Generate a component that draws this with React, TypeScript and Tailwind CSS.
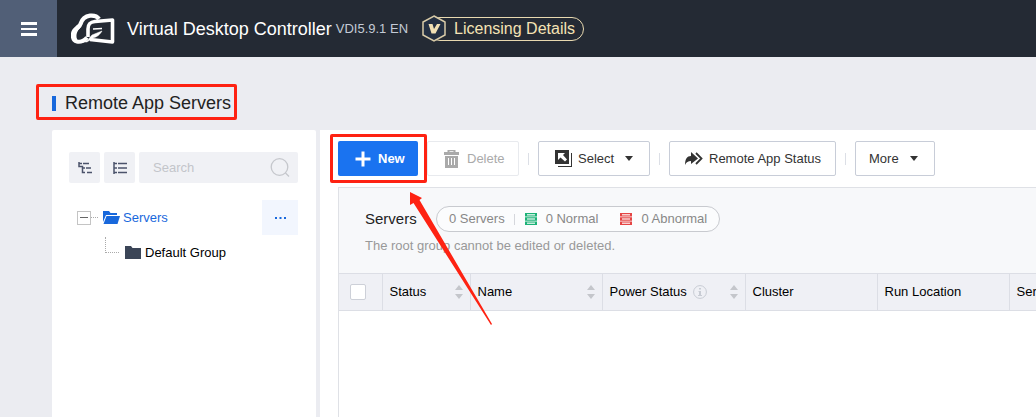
import type { ReactNode } from 'react'

const columns = [
  { label: 'Status', width: 'w-[88px]', sortable: true },
  { label: 'Name', width: 'w-[132px]', sortable: true },
  { label: 'Power Status', width: 'w-[143px]', sortable: true, info: true },
  { label: 'Cluster', width: 'w-[132px]' },
  { label: 'Run Location', width: 'w-[132px]' },
  { label: 'Server IP', width: 'w-[132px]' },
]

function Logo() {
  return (
    <svg viewBox="0 0 44 32" className="h-8 w-11" fill="none" stroke="#fff" strokeLinejoin="round">
      <path d="M28 6C25 1.500 13 0 9.500 11C9 13 8 13.500 6 15C0 19 1 27 6 28.500C10 29.500 14 27 16 24.500" strokeWidth="4.200" />
      <path d="M8 13C3 18 2 22 4 27" strokeWidth="4.500" />
      <path d="M17 24V16C17 11 19 9 24 8.500L41.500 7V29L19 26.500" strokeWidth="3.600" />
      <path d="M10 29C17 29 18 25 21 22L31 18C28 23 25 24 22 25L16 29Z" fill="#fff" strokeWidth=".5" />
      <path d="M22 16L31 15.500" strokeWidth="1.500" />
    </svg>
  )
}

function VipBadge() {
  return (
    <svg viewBox="0 0 24 27" className="h-[27px] w-6">
      <path d="M12 1L23 7V20L12 26L1 20V7Z" fill="#232f42" stroke="#d9cba8" strokeWidth="1.500" />
      <path d="M6.500 9H10.500L12 14L15 9H18.500L13.500 18.500H9.500Z" fill="#f0dfb4" />
    </svg>
  )
}

function ServerIcon({ className }: { className: string }) {
  return (
    <svg viewBox="0 0 12 12" className={`h-3 w-3 ${className}`}>
      <path d="M0 0H12V3.500H0ZM0 4.300H12V7.700H0ZM0 8.500H12V12H0Z" fill="currentColor" />
      <path d="M2 1H10V2.500H2ZM2 5.300H10V6.700H2ZM2 9.500H10V11H2Z" fill="#fff" fillOpacity=".75" />
    </svg>
  )
}

function Caret() {
  return (
    <svg viewBox="0 0 8 5" className="h-[5px] w-2">
      <path d="M0 0H8L4 5Z" fill="#333" />
    </svg>
  )
}

function ToolButton({ children, className = '' }: { children: ReactNode; className?: string }) {
  return (
    <button className={`flex h-[35px] shrink-0 items-center rounded-xs border border-[#c8cdd8] bg-white text-[#333] ${className}`}>
      {children}
    </button>
  )
}

function Divider() {
  return <span className="mx-[9px] h-3 w-px shrink-0 bg-[#dcdfe6]" />
}

export default function App() {
  return (
    <div className="relative flex min-h-screen flex-col overflow-hidden bg-[#ebecf1] font-['Liberation_Sans',Arial,sans-serif] text-[13px] leading-4 text-black">
      <header className="flex h-[57px] items-center bg-[#242a34]">
        <button aria-label="Menu" className="flex h-full w-[57px] items-center justify-center bg-[#515f77]">
          <svg viewBox="0 0 16 14" className="h-[14px] w-4">
            <path d="M0 0H16V3H0ZM0 6H16V8H0ZM0 11H16V14H0Z" fill="#fff" />
          </svg>
        </button>
        <div className="ml-[14px]"><Logo /></div>
        <span className="ml-3 text-lg leading-6 text-white">Virtual Desktop Controller</span>
        <span className="ml-1 text-[#c3cad6]">VDI5.9.1 EN</span>
        <a href="#licensing" className="relative ml-5 flex h-6 items-center rounded-full border border-[#e8d9b0] pr-2 pl-[25px] text-base text-[#f5e3b5]">
          <span className="absolute -left-[7px]"><VipBadge /></span>
          Licensing Details
        </a>
      </header>

      <h1 className="mt-9 mb-[17px] ml-[52px] flex h-5 items-center text-lg text-[#222]">
        <span className="mr-[9px] h-[15px] w-1 bg-[#1868dc]" />
        Remote App Servers
      </h1>

      <main className="flex flex-1 pl-[52px]">
        <aside className="w-[264px] shrink-0 rounded-t-xs bg-white pt-[22px] pr-[18px] pl-[17px]">
          <div className="flex gap-1">
            <button aria-label="Expand tree" className="flex h-[31px] w-[31px] shrink-0 items-center justify-center rounded-xs bg-[#f0f1f5]">
              <svg viewBox="0 0 14 12" className="h-3 w-[14px]" stroke="#4b536b" fill="none" strokeWidth="1.500">
                <path d="M1 0V4.500H4.500V10.500H7M1 1.500H4M5 1.500H11M4.500 6H7M8 6H13M9 10.500H14" />
              </svg>
            </button>
            <button aria-label="Collapse tree" className="flex h-[31px] w-[31px] shrink-0 items-center justify-center rounded-xs bg-[#f0f1f5]">
              <svg viewBox="0 0 14 12" className="h-3 w-[14px]" stroke="#4b536b" fill="none" strokeWidth="1.500">
                <path d="M1 0V12M1 1.500H4M5 1.500H14M1 6H4M5 6H14M1 10.500H4M5 10.500H14" />
              </svg>
            </button>
            <label className="flex h-[31px] min-w-0 flex-1 items-center rounded-xs bg-[#f0f1f5] pr-2 pl-[14px]">
              <input aria-label="Search" placeholder="Search" className="w-full min-w-0 bg-transparent outline-none placeholder:text-[#c3c5ca]" />
              <svg viewBox="0 0 20 20" className="h-5 w-5 shrink-0" fill="none" stroke="#c5c7cc" strokeWidth="1.300">
                <circle cx="9.500" cy="9" r="8.300" />
                <path d="M15.500 15L19 18.500" />
              </svg>
            </label>
          </div>

          <ul className="mt-[17px]">
            <li className="flex h-[35px] items-center pl-2 text-[#1868dc]">
              <button aria-label="Collapse Servers" className="flex h-[14px] w-[14px] items-center justify-center border border-[#c4c4c4]">
                <span className="h-px w-2 bg-[#666]" />
              </button>
              <span className="mr-[5px] w-[7px] border-t border-dotted border-[#aaa]" />
              <svg viewBox="0 0 17 13" className="h-[13px] w-[17px]" fill="#1868dc">
                <path d="M0 0H6L7.500 2H14V4H3L0 11Z" />
                <path d="M3.500 5H17L14.500 13H0.500Z" />
              </svg>
              <a href="#servers" className="ml-[3px]">Servers</a>
              <button aria-label="Group actions" className="ml-auto flex h-full w-9 items-center justify-center bg-[#f2f6fe]">
                <svg viewBox="0 0 11 2" className="h-[2px] w-[11px]" fill="#1868dc">
                  <path d="M0 0H2V2H0ZM4.500 0H6.500V2H4.500ZM9 0H11V2H9Z" />
                </svg>
              </button>
            </li>
            <li className="flex h-[35px] items-center pl-9">
              <span className="mr-[6px] mb-4 h-4 w-[14px] border-b border-l border-dotted border-[#aaa]" />
              <svg viewBox="0 0 16 13" className="h-[13px] w-4" fill="#3b4557">
                <path d="M0 0H6L7.500 2H16V13H0Z" />
              </svg>
              <a href="#default" className="ml-1">Default Group</a>
            </li>
          </ul>
        </aside>

        <section className="ml-1 flex min-w-0 flex-1 flex-col bg-white pt-[11px] pl-[18px]">
          <div className="flex items-center">
            <button className="flex h-[35px] w-20 shrink-0 items-center rounded-xs bg-[#1a73f0] pl-[17px] font-bold text-white">
              <svg viewBox="0 0 16 16" className="mr-[7px] h-4 w-4">
                <path d="M6.500 0.500H9.500V6.500H15.500V9.500H9.500V15.500H6.500V9.500H0.500V6.500H6.500Z" fill="#fff" />
              </svg>
              New
            </button>
            <button disabled className="ml-[9px] flex h-[35px] w-[92px] shrink-0 items-center rounded-xs border border-[#e8eaee] pl-4 text-[#aaa]">
              <svg viewBox="0 0 15 18" className="mr-2 h-[18px] w-[15px]" fill="#aaa">
                <path d="M3.500 0H11.500V2H15V5H0V2H3.500ZM5.500 1.200V2H9.500V1.200ZM1 6H14V18H1ZM4 8V15H5V8ZM7 8V15H8V8ZM10 8V15H11V8Z" fillRule="evenodd" />
              </svg>
              Delete
            </button>
            <Divider />
            <ToolButton className="w-28 pl-4">
              <svg viewBox="0 0 17 17" className="mr-[6px] h-[17px] w-[17px]">
                <path d="M0 0H14V14H0ZM16 3H17V17H3V16H16Z" fill="#333" />
                <path d="M3 3H10L8 5L12 9.500L10 11.500L5.500 7.500L3 10Z" fill="#fff" />
              </svg>
              Select
              <span className="ml-[11px]"><Caret /></span>
            </ToolButton>
            <Divider />
            <ToolButton className="w-[167px] pl-[15px]">
              <svg viewBox="0 0 18 14" className="mr-[6px] h-[14px] w-[18px]" fill="#333">
                <path d="M6 0L13 6.500L6 12V9C3 9 1.500 10 0 13C0 7 2 4 6 4Z" />
                <path d="M11 1L16.500 6.500L11 12" fill="none" stroke="#333" strokeWidth="1.800" />
              </svg>
              Remote App Status
            </ToolButton>
            <Divider />
            <ToolButton className="w-20 pl-[13px]">
              More
              <span className="ml-[11px]"><Caret /></span>
            </ToolButton>
          </div>

          <div className="mt-[11px] flex flex-1 flex-col border-t border-l border-[#dfe1e6]">
            <div className="h-[85px] bg-[#f7f8fa] pt-[18px] pl-[26px]">
              <div className="flex h-[26px] items-center">
                <h2 className="w-[71px] text-[15px] text-[#222]">Servers</h2>
                <div className="flex h-[26px] items-center rounded-full border border-[#c8cacf] bg-[#fbfcfd] px-3 text-[#888]">
                  0 Servers
                  <span className="mr-[10px] ml-[9px] h-[11px] w-px bg-[#d5d7dc]" />
                  <ServerIcon className="mr-[9px] text-[#1cb277]" />
                  0 Normal
                  <ServerIcon className="mr-[9px] ml-[22px] text-[#e54545]" />
                  0 Abnormal
                </div>
              </div>
              <p className="mt-[6px] text-[#999]">The root group cannot be edited or deleted.</p>
            </div>

            <div className="overflow-hidden">
              <table className="w-[802px] table-fixed border-collapse text-left">
                <thead>
                  <tr className="h-[37px] border-y border-[#dcdee5] bg-[#eff0f5]">
                    <th className="w-[43px] border-r border-[#dcdee5] pl-[11px]">
                      <input type="checkbox" aria-label="Select all" className="block h-4 w-4 appearance-none rounded-xs border border-[#cdd0d8] bg-white" />
                    </th>
                    {columns.map((c) => (
                      <th key={c.label} className={`border-r border-[#dcdee5] px-[7px] font-normal ${c.width}`}>
                        <div className="flex items-center whitespace-nowrap">
                          {c.label}
                          {c.info && (
                            <svg viewBox="0 0 14 14" className="ml-[6px] h-[14px] w-[14px]">
                              <circle cx="7" cy="7" r="6.400" fill="none" stroke="#c8ccd4" />
                              <path d="M6 3H8V4.500H6ZM5.500 6H8V10H9V11H5V10H6V7H5.500Z" fill="#c8ccd4" />
                            </svg>
                          )}
                          {c.sortable && (
                            <svg viewBox="0 0 8 14" className="ml-auto h-[14px] w-2" fill="#c4c6cb">
                              <path d="M4 0L8 5H0ZM0 9H8L4 14Z" />
                            </svg>
                          )}
                        </div>
                      </th>
                    ))}
                  </tr>
                </thead>
              </table>
            </div>
          </div>
        </section>
      </main>

      <div className="pointer-events-none absolute top-[84px] left-9 h-9 w-[201px] rounded-xs border-3 border-[#fe2212]" />
      <div className="pointer-events-none absolute top-[134px] left-[330px] h-[49px] w-[97px] rounded-xs border-3 border-[#fe2212]" />
      <svg viewBox="0 0 84 135" className="pointer-events-none absolute top-[191px] left-[409px] h-[135px] w-[84px]" fill="#fe2212">
        <path d="M1 1L13 7L10.500 9L83 133L82 134L4.500 12L1 14Z" />
      </svg>
    </div>
  )
}
